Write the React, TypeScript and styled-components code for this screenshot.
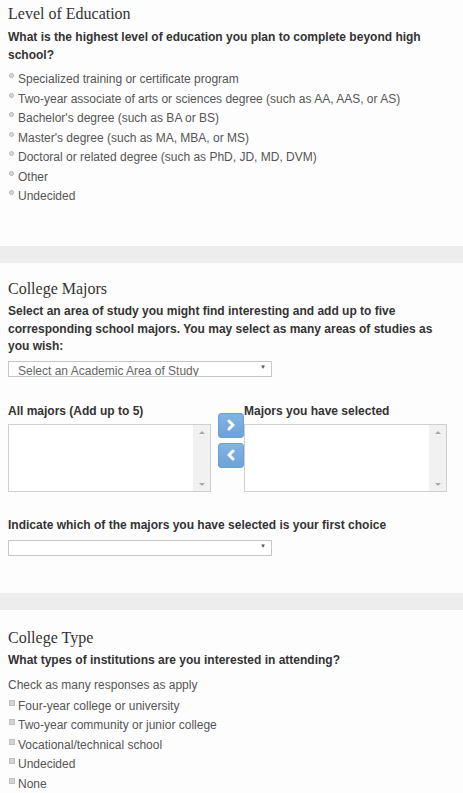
import React from "react";
import styled, { createGlobalStyle } from "styled-components";

const Global = createGlobalStyle`
  html, body { margin: 0; padding: 0; background: #fdfdfe; }
  body { font-family: "Liberation Sans", Arial, sans-serif; }
`;

const Page = styled.div`
  width: 463px;
  display: flex;
  flex-direction: column;
  background: #fdfdfe;
`;

const Section = styled.section<{ $pt: number; $h?: number }>`
  display: flex;
  flex-direction: column;
  padding: ${(p) => p.$pt}px 8px 0 8px;
  ${(p) => (p.$h ? `height: ${p.$h}px;` : "")}
  box-sizing: border-box;
`;

const Band = styled.div`
  height: 17px;
  background: #ededee;
`;

const Heading = styled.h2`
  margin: 0;
  font-family: "Liberation Serif", "Times New Roman", serif;
  font-weight: normal;
  font-size: 16px;
  line-height: 20px;
  color: #333;
`;

const Question = styled.p<{ $mt?: number }>`
  margin: ${(p) => p.$mt ?? 4}px 0 0 0;
  font-weight: bold;
  font-size: 12px;
  line-height: 17.5px;
  color: #333;
`;

const Hint = styled.p`
  margin: 7px 0 0 0;
  font-size: 12px;
  line-height: 17px;
  color: #555;
`;

const OptionList = styled.ul<{ $mt: number }>`
  list-style: none;
  margin: ${(p) => p.$mt}px 0 0 0;
  padding: 0;
`;

const Option = styled.li`
  display: flex;
  align-items: flex-start;
  height: 19.5px;
  font-size: 12px;
  line-height: 15px;
  color: #555;
`;

const RadioDot = styled.span`
  width: 5px;
  height: 5px;
  border-radius: 50%;
  background: #d8d8d8;
  border: 1px solid #b4b4b4;
  box-sizing: border-box;
  margin: 1px 4px 0 1px;
  flex: none;
`;

const CheckBox = styled.span`
  width: 6px;
  height: 6px;
  background: #d4d4d4;
  border: 1px solid #c0c0c0;
  box-sizing: border-box;
  margin: 1px 3px 0 1px;
  flex: none;
`;

const FakeSelect = styled.div<{ $mt: number }>`
  margin-top: ${(p) => p.$mt}px;
  width: 264px;
  height: 16px;
  box-sizing: border-box;
  border: 1px solid #c6c6c6;
  background: #fff;
  position: relative;
  overflow: hidden;
  font-size: 12px;
  color: #666;
`;

const SelectText = styled.span`
  display: block;
  padding: 2px 0 0 9px;
  line-height: 14px;
  white-space: nowrap;
`;

const SelectArrow = styled.span`
  position: absolute;
  right: 5px;
  top: 2px;
  font-size: 6px;
  color: #555;
`;

const TransferRow = styled.div`
  display: flex;
  margin-top: 26px;
`;

const ListCol = styled.div`
  display: flex;
  flex-direction: column;
  width: 203px;
`;

const ListLabel = styled.div`
  font-weight: bold;
  font-size: 12px;
  line-height: 16px;
  color: #333;
  height: 16px;
  white-space: nowrap;
`;

const ListBox = styled.div`
  margin-top: 5px;
  height: 68px;
  box-sizing: border-box;
  border: 1px solid #cfcfcf;
  background: #fff;
  display: flex;
  justify-content: flex-end;
`;

const ScrollTrack = styled.div`
  width: 17px;
  background: #f1f1f1;
  display: flex;
  flex-direction: column;
  justify-content: space-between;
  align-items: center;
  padding: 6px 0 5px;
  box-sizing: border-box;
`;

const Tri = styled.span<{ $up?: boolean }>`
  width: 0;
  height: 0;
  border-left: 3px solid transparent;
  border-right: 3px solid transparent;
  ${(p) => (p.$up ? "border-bottom: 3px solid #a8a8a8;" : "border-top: 3px solid #a8a8a8;")}
`;

const ButtonCol = styled.div`
  display: flex;
  flex-direction: column;
  gap: 5px;
  margin-left: 7px;
  padding-top: 10px;
  width: 26px;
`;

const MoveButton = styled.button`
  width: 26px;
  height: 25px;
  padding: 0;
  border: 1px solid #6c9fd3;
  border-radius: 3px;
  background: linear-gradient(#82b3e3, #6ea3d9);
  display: flex;
  align-items: center;
  justify-content: center;
`;

const Chevron = ({ dir }: { dir: "left" | "right" }) => (
  <svg width="10" height="12" viewBox="0 0 10 12">
    <path
      d={dir === "right" ? "M3 2 L7 6 L3 10" : "M7 2 L3 6 L7 10"}
      fill="none"
      stroke="#fff"
      strokeWidth="3"
      strokeLinecap="round"
      strokeLinejoin="round"
    />
  </svg>
);

const FirstChoice = styled.div`
  margin-top: 25px;
  font-weight: bold;
  font-size: 12px;
  line-height: 16px;
  color: #333;
`;

const educationOptions = [
  "Specialized training or certificate program",
  "Two-year associate of arts or sciences degree (such as AA, AAS, or AS)",
  "Bachelor's degree (such as BA or BS)",
  "Master's degree (such as MA, MBA, or MS)",
  "Doctoral or related degree (such as PhD, JD, MD, DVM)",
  "Other",
  "Undecided",
];

const typeOptions = [
  "Four-year college or university",
  "Two-year community or junior college",
  "Vocational/technical school",
  "Undecided",
  "None",
];

const ScrollList = () => (
  <ListBox>
    <ScrollTrack>
      <Tri $up />
      <Tri />
    </ScrollTrack>
  </ListBox>
);

export default function App() {
  return (
    <Page>
      <Global />
      <Section $pt={4} $h={246}>
        <Heading>Level of Education</Heading>
        <Question $mt={5}>
          What is the highest level of education you plan to complete beyond high school?
        </Question>
        <OptionList $mt={8}>
          {educationOptions.map((o) => (
            <Option key={o}>
              <RadioDot />
              {o}
            </Option>
          ))}
        </OptionList>
      </Section>
      <Band />
      <Section $pt={16} $h={330}>
        <Heading>College Majors</Heading>
        <Question>
          Select an area of study you might find interesting and add up to five corresponding
          school majors. You may select as many areas of studies as you wish:
        </Question>
        <FakeSelect $mt={5}>
          <SelectText>Select an Academic Area of Study</SelectText>
          <SelectArrow>▼</SelectArrow>
        </FakeSelect>
        <TransferRow>
          <ListCol>
            <ListLabel>All majors (Add up to 5)</ListLabel>
            <ScrollList />
          </ListCol>
          <ButtonCol>
            <MoveButton aria-label="Add">
              <Chevron dir="right" />
            </MoveButton>
            <MoveButton aria-label="Remove">
              <Chevron dir="left" />
            </MoveButton>
          </ButtonCol>
          <ListCol>
            <ListLabel>Majors you have selected</ListLabel>
            <ScrollList />
          </ListCol>
        </TransferRow>
        <FirstChoice>Indicate which of the majors you have selected is your first choice</FirstChoice>
        <FakeSelect $mt={7}>
          <SelectArrow>▼</SelectArrow>
        </FakeSelect>
      </Section>
      <Band />
      <Section $pt={18}>
        <Heading>College Type</Heading>
        <Question $mt={4}>What types of institutions are you interested in attending?</Question>
        <Hint>Check as many responses as apply</Hint>
        <OptionList $mt={5}>
          {typeOptions.map((o) => (
            <Option key={o}>
              <CheckBox />
              {o}
            </Option>
          ))}
        </OptionList>
      </Section>
    </Page>
  );
}
